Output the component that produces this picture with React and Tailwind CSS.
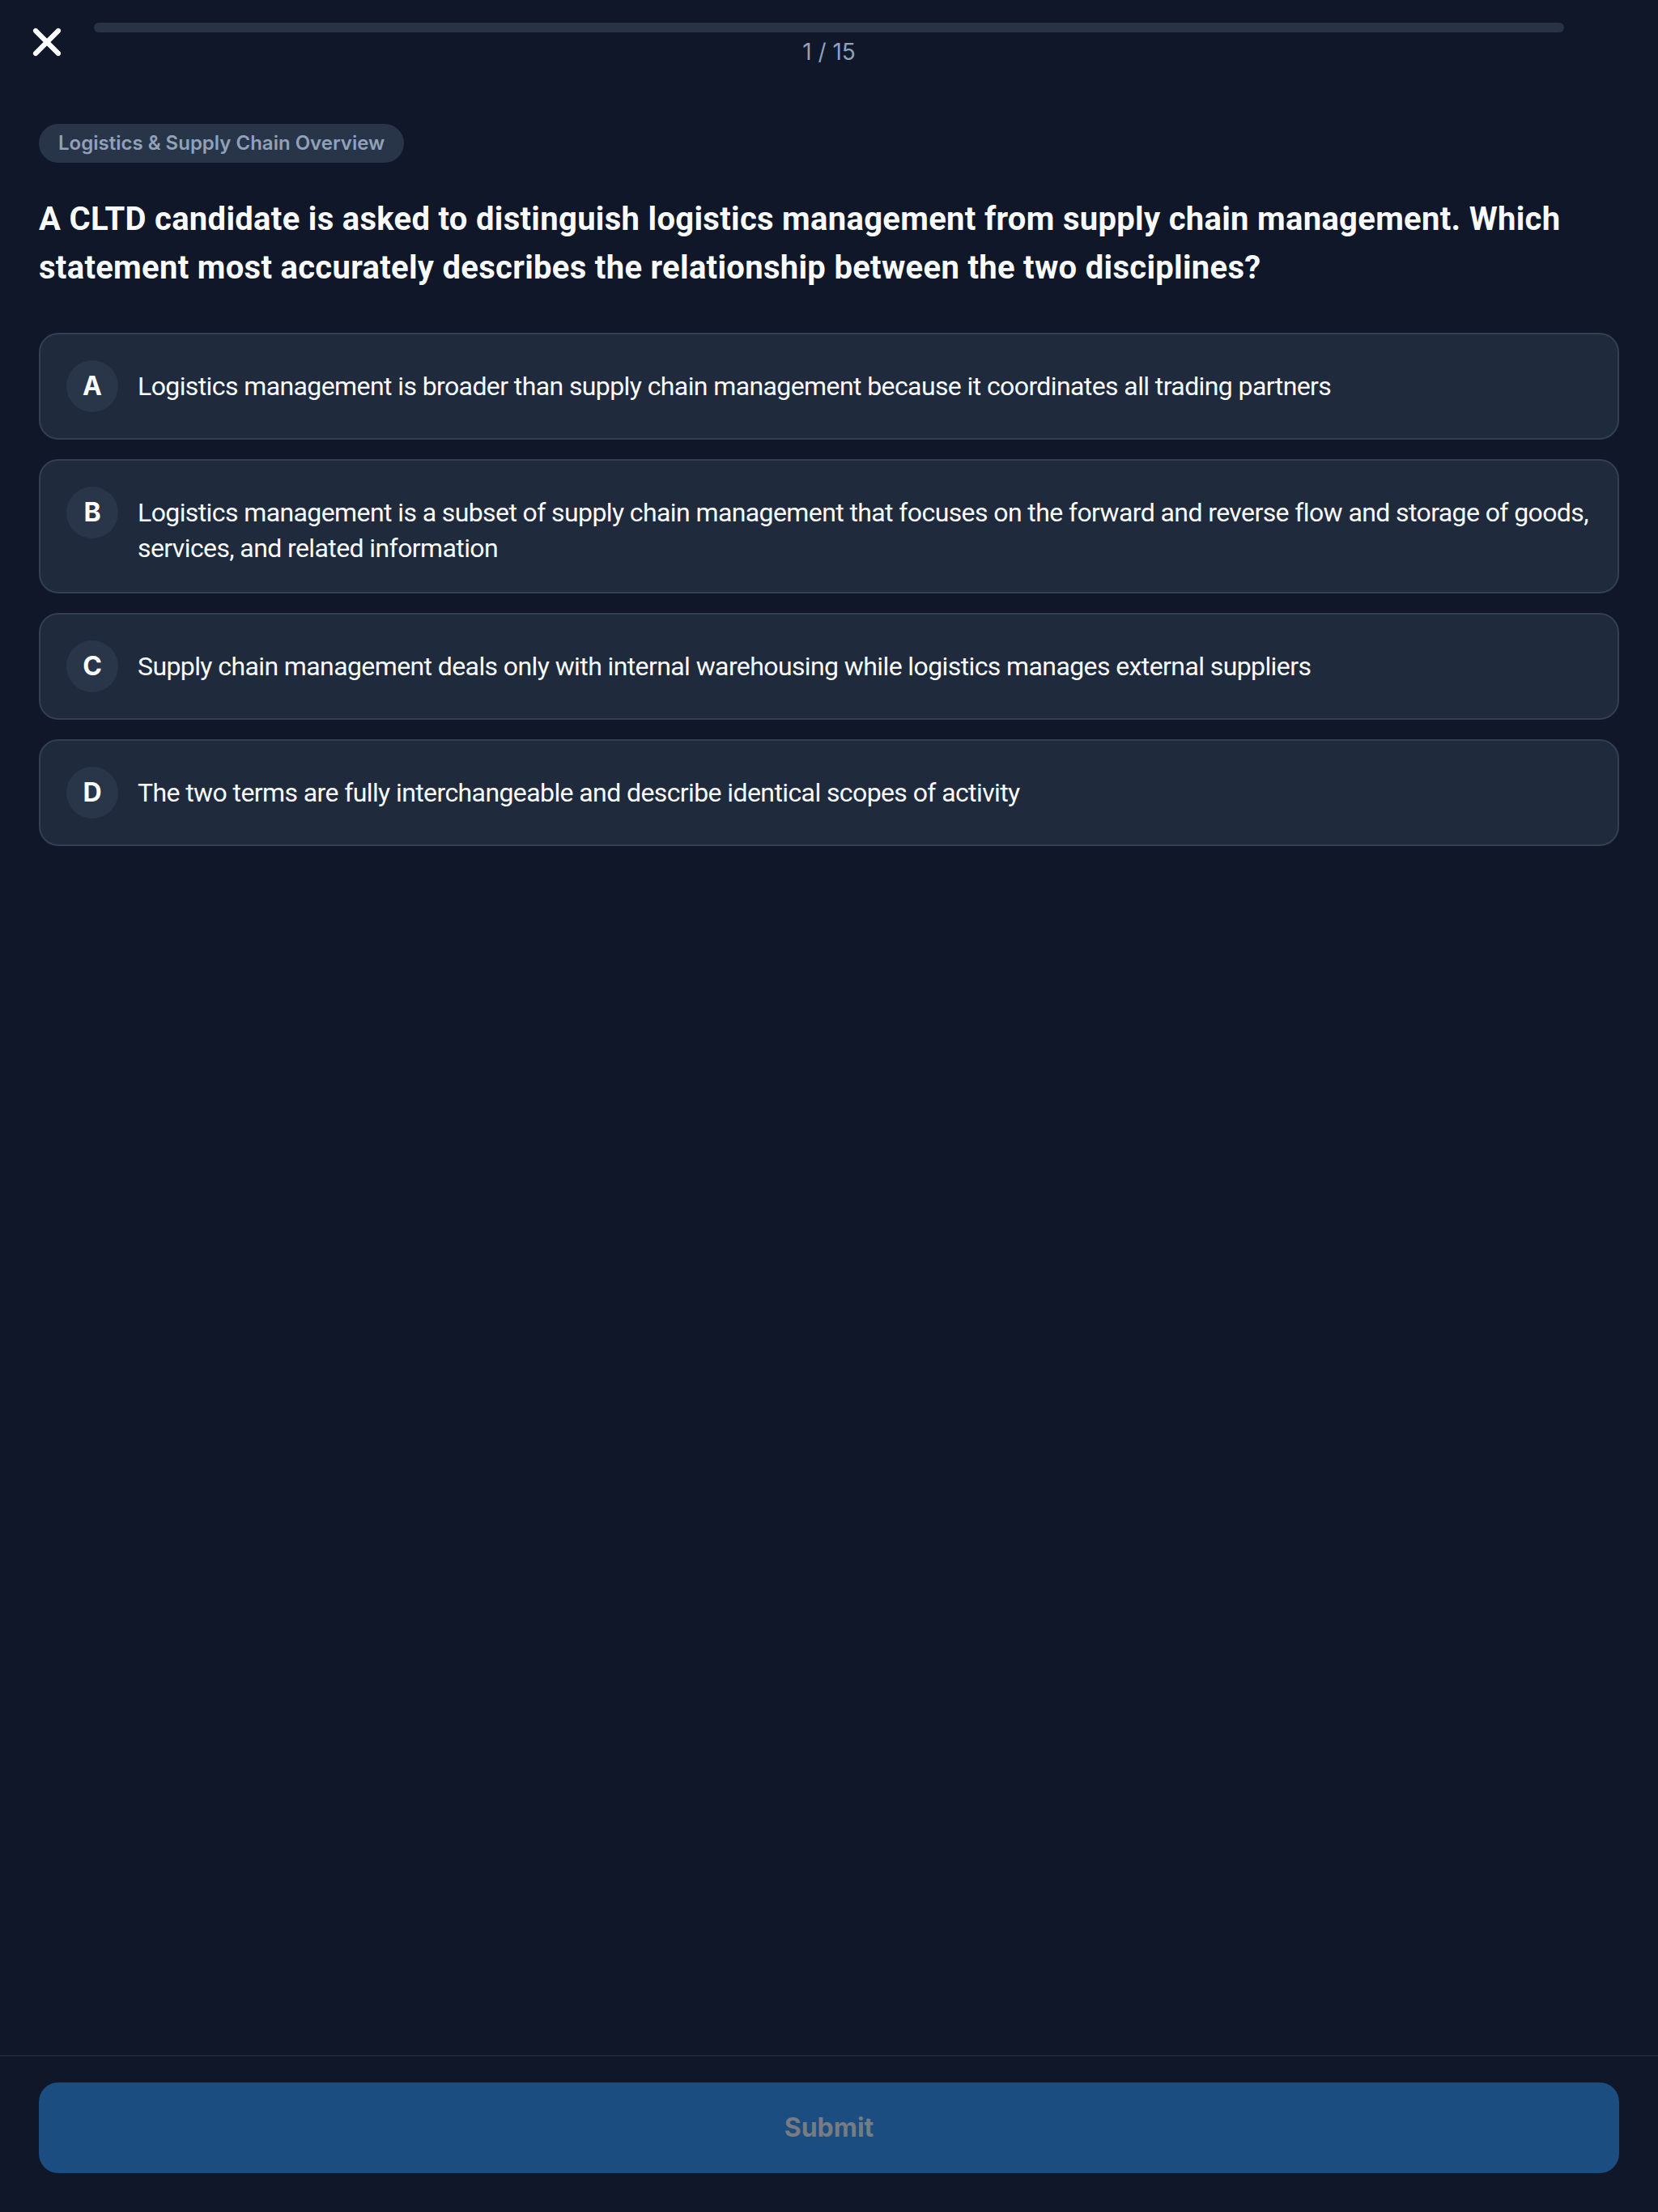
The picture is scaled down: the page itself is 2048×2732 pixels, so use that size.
import { X } from "lucide-react";

const question = {
  topic: "Logistics & Supply Chain Overview",
  prompt:
    "A CLTD candidate is asked to distinguish logistics management from supply chain management. Which statement most accurately describes the relationship between the two disciplines?",
  options: [
    {
      key: "A",
      text: "Logistics management is broader than supply chain management because it coordinates all trading partners",
    },
    {
      key: "B",
      text: "Logistics management is a subset of supply chain management that focuses on the forward and reverse flow and storage of goods, services, and related information",
    },
    {
      key: "C",
      text: "Supply chain management deals only with internal warehousing while logistics manages external suppliers",
    },
    {
      key: "D",
      text: "The two terms are fully interchangeable and describe identical scopes of activity",
    },
  ],
};

const OptionCard = ({ option }) => (
  <button
    type="button"
    className="flex w-full items-start gap-3 rounded-xl border border-[#324054] bg-[#1f2a3c] p-4 text-left"
  >
    <span className="flex h-8 w-8 shrink-0 items-center justify-center rounded-full bg-[#293548] font-[Inter] text-base font-bold text-white">
      {option.key}
    </span>
    <span className="mt-[5px] text-base leading-snug tracking-[-0.3px] text-slate-50">
      {option.text}
    </span>
  </button>
);

export default function App() {
  const current = 1;
  const total = 15;

  return (
    <div className="bg-[#0f1729] [zoom:2]">
      <div
        className="flex min-h-[1366px] w-[1024px] flex-col bg-[#0f1729] text-white"
        style={{ fontFamily: "Roboto, Inter, 'Noto Sans', sans-serif" }}
      >
        {/* header */}
        <header className="flex items-start gap-[15px] px-[15px] pt-3">
          <button type="button" className="shrink-0 text-white">
            <X size={28} strokeWidth={2.6} />
          </button>
          <div className="flex-1 pt-0.5">
            <div className="h-1.5 w-full rounded-full bg-[#283446]">
              <div className="h-full w-0 rounded-full bg-sky-500" />
            </div>
            <p className="mt-0.5 text-center font-[Inter] text-sm text-slate-400">
              {current} / {total}
            </p>
          </div>
          <div className="w-7 shrink-0" />
        </header>

        {/* question */}
        <main className="flex-1 px-6 pt-[33px]">
          <span className="inline-block rounded-full bg-[#283548] px-3 py-1 font-[Inter] text-xs font-semibold text-slate-400">
            {question.topic}
          </span>
          <h1 className="mt-5 text-xl leading-normal font-bold tracking-[0.15px] text-slate-50">
            {question.prompt}
          </h1>
          <div className="mt-[25px] flex flex-col gap-3">
            {question.options.map((option) => (
              <OptionCard key={option.key} option={option} />
            ))}
          </div>
        </main>

        {/* footer */}
        <footer className="border-t border-[#1c2636] px-6 pt-4 pb-6">
          <button
            type="button"
            disabled
            className="h-14 w-full rounded-xl bg-[#1b4d80] font-[Inter] text-base font-bold text-[#767c84]"
          >
            Submit
          </button>
        </footer>
      </div>
    </div>
  );
}
